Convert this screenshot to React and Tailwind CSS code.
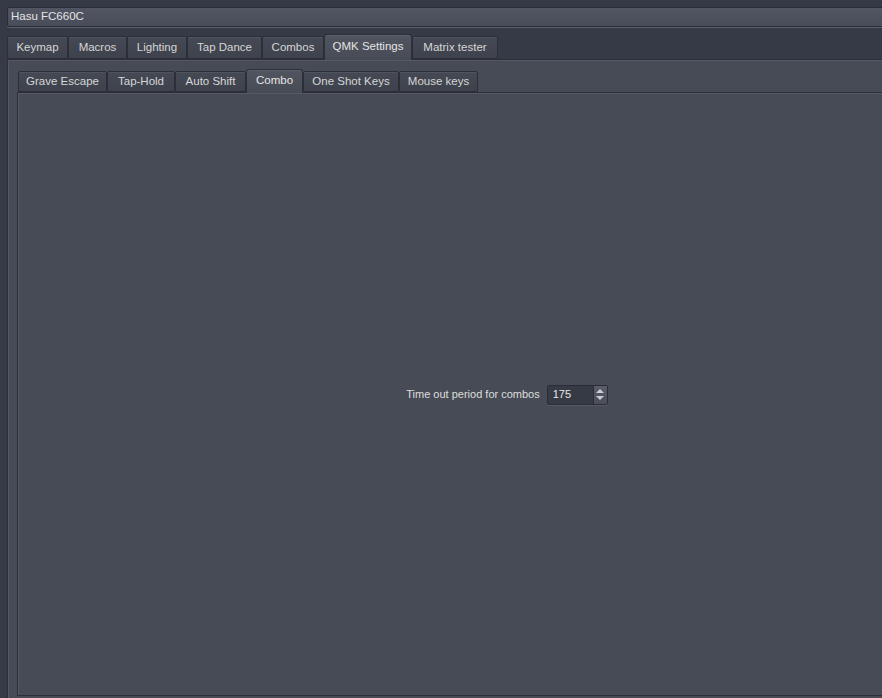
import React from 'react'

const outerTabs = [
  { label: 'Keymap', w: 61 },
  { label: 'Macros', w: 59 },
  { label: 'Lighting', w: 60 },
  { label: 'Tap Dance', w: 75 },
  { label: 'Combos', w: 62 },
  { label: 'QMK Settings', w: 88, active: true },
  { label: 'Matrix tester', w: 86 },
]

const innerTabs = [
  { label: 'Grave Escape', w: 89 },
  { label: 'Tap-Hold', w: 68 },
  { label: 'Auto Shift', w: 71 },
  { label: 'Combo', w: 57, active: true },
  { label: 'One Shot Keys', w: 96 },
  { label: 'Mouse keys', w: 79 },
]

function Tab({ label, w, active, h }) {
  return (
    <div
      style={{ width: w }}
      className={
        active
          ? `relative z-10 -mb-px flex ${h.active} items-center justify-center rounded-t-[3px] border border-b-0 border-[#2c2f37] bg-gradient-to-b from-[#51555f] to-[#474b56] text-[#e4e4e4] shadow-[inset_0_1px_0_#5c606b]`
          : `flex ${h.idle} items-center justify-center rounded-t-[2px] border border-[#2c2f37] bg-gradient-to-b from-[#454955] to-[#3e424c] text-[#d6d6d6] shadow-[inset_0_1px_0_#50545f]`
      }
    >
      <span className={active ? '-mt-px' : 'mt-px'}>{label}</span>
    </div>
  )
}

function SpinBox({ value }) {
  return (
    <div className="flex h-[20px] w-[61px] items-stretch rounded-[2px] border border-[#2a2d35] bg-[#363a45] shadow-[0_1px_0_#565a65]">
      <div className="flex flex-1 items-center pl-[5px] text-[#e8e8e8]">{value}</div>
      <div className="flex w-[14px] flex-col items-center justify-center gap-[3px] border-l border-[#2a2d35] bg-gradient-to-b from-[#5a5e69] to-[#4a4e59]">
        <svg width="8" height="4" viewBox="0 0 8 4">
          <path d="M0 4 L4 0 L8 4 Z" fill="#c9ccd3" />
        </svg>
        <svg width="8" height="4" viewBox="0 0 8 4">
          <path d="M0 0 L8 0 L4 4 Z" fill="#c9ccd3" />
        </svg>
      </div>
    </div>
  )
}

export default function App() {
  return (
    <div
      className="h-[698px] w-[882px] overflow-hidden bg-[#363a46] text-[11px]"
      style={{ fontFamily: '"Liberation Sans", Arial, sans-serif' }}
    >
      <div className="w-[998px] pl-[7px] pt-[7px]">
        {/* Device selector */}
        <div className="flex h-[20px] items-center rounded-[2px] border border-[#2a2d35] bg-gradient-to-b from-[#525663] to-[#494d59] pl-[3px] text-[11.5px] text-[#e4e4e4] shadow-[0_1px_0_#5a5e69]">
          Hasu FC660C
        </div>

        {/* Top-level tabs */}
        <div className="mt-[7px] flex h-[25px] items-end text-[11.5px]">
          {outerTabs.map((t) => (
            <Tab key={t.label} {...t} h={{ active: 'h-[26px]', idle: 'h-[23px]' }} />
          ))}
        </div>

        {/* Outer panel */}
        <div className="h-[700px] border border-[#2c2f37] bg-[#474b56] pl-[9px] pt-[9px] shadow-[inset_1px_1px_0_#555964]">
          {/* Sub tabs */}
          <div className="flex h-[23px] items-end pl-px text-[11.5px]">
            {innerTabs.map((t) => (
              <Tab key={t.label} {...t} h={{ active: 'h-[24px]', idle: 'h-[21px]' }} />
            ))}
          </div>

          {/* Inner pane */}
          <div className="flex h-[604px] items-center justify-center border border-[#2c2f37] bg-[#474b56] shadow-[inset_1px_1px_0_#555964]">
            <div className="flex items-center gap-[7px] pt-[1px]">
              <span className="text-[#dedede]">Time out period for combos</span>
              <SpinBox value="175" />
            </div>
          </div>
        </div>
      </div>
    </div>
  )
}
